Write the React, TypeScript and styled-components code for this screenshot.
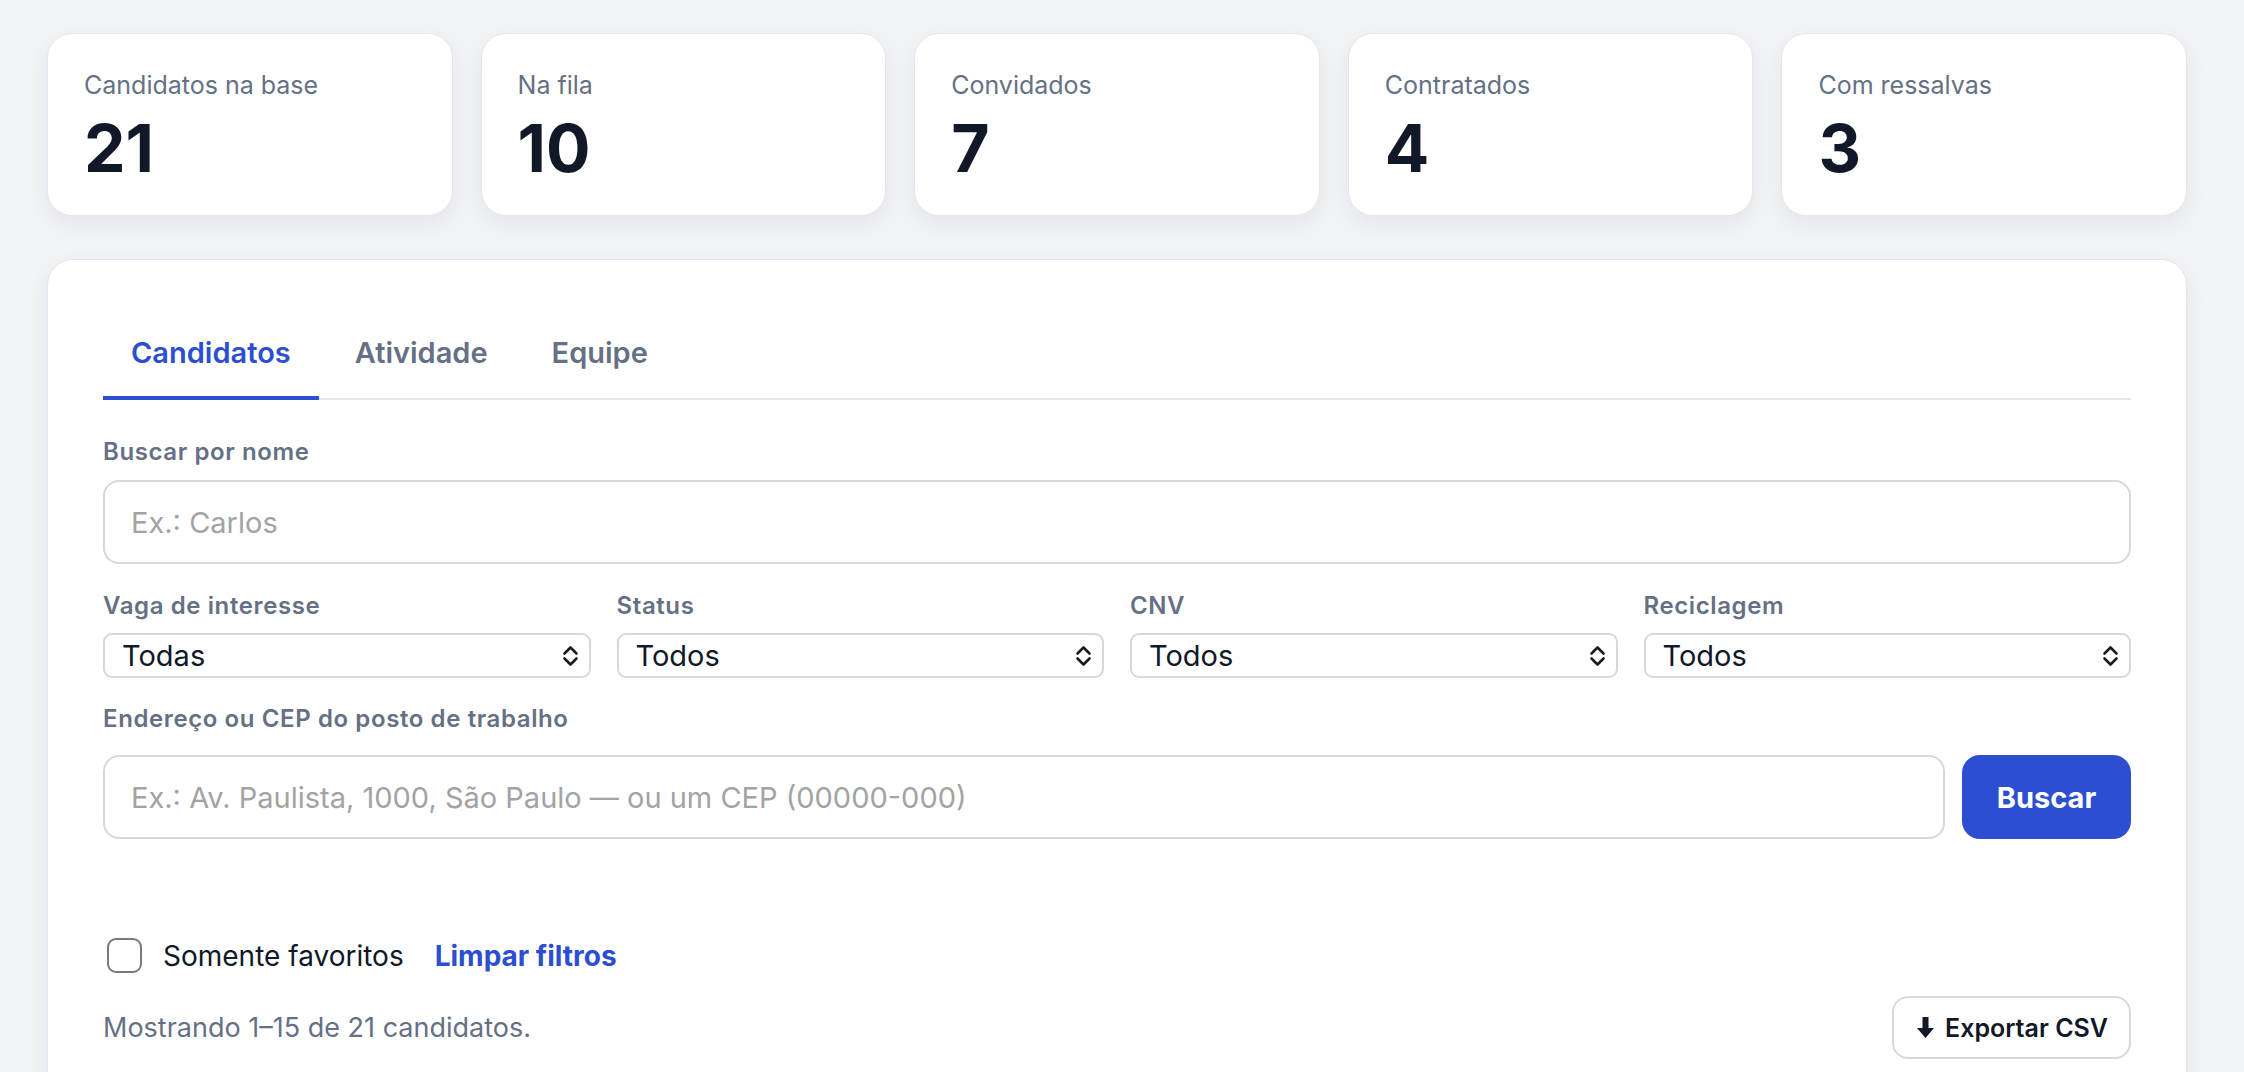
import React from "react";
import styled, { createGlobalStyle } from "styled-components";

const GlobalStyle = createGlobalStyle`
  html, body {
    margin: 0;
    padding: 0;
    background: #f2f3f7;
    font-family: Inter, "Noto Sans", "Liberation Sans", sans-serif;
  }
  * {
    box-sizing: border-box;
  }
`;

const Page = styled.div`
  min-height: 1072px;
  padding: 33px 57px 0 47px;
`;

const Stats = styled.div`
  display: grid;
  grid-template-columns: repeat(5, 1fr);
  gap: 28px;
`;

const StatCard = styled.div`
  background: #fff;
  border: 1px solid #e4e6ec;
  border-radius: 25px;
  box-shadow: 0 8px 24px rgba(16, 24, 40, 0.06);
  padding: 33px 36px 34px;
`;

const StatLabel = styled.div`
  font-size: 25px;
  line-height: 36px;
  color: #667085;
`;

const StatValue = styled.div`
  margin-top: 12px;
  font-size: 66px;
  line-height: 66px;
  font-weight: 700;
  color: #111827;
`;

const Panel = styled.div`
  margin-top: 43px;
  background: #fff;
  border: 1px solid #e4e6ec;
  border-radius: 26px;
  box-shadow: 0 8px 24px rgba(16, 24, 40, 0.06);
  padding: 52px 55px 40px;
`;

const TabList = styled.div`
  display: flex;
  gap: 8px;
  border-bottom: 2px solid #e5e7eb;
`;

const Tab = styled.button<{ $active?: boolean }>`
  appearance: none;
  background: none;
  border: none;
  border-bottom: 4px solid ${(p) => (p.$active ? "#2b4fd0" : "transparent")};
  margin-bottom: -2px;
  padding: 20px 28px 22px;
  font-family: inherit;
  font-size: 29px;
  line-height: 42px;
  font-weight: 600;
  color: ${(p) => (p.$active ? "#2b4fd0" : "#667085")};
  cursor: pointer;
`;

const Field = styled.div<{ $top?: number }>`
  margin-top: ${(p) => p.$top ?? 0}px;
  display: flex;
  flex-direction: column;
`;

const Label = styled.label<{ $gap?: number }>`
  font-size: 24px;
  line-height: 32px;
  letter-spacing: 0.6px;
  font-weight: 600;
  color: #667085;
  margin-bottom: ${(p) => p.$gap ?? 11}px;
`;

const TextInput = styled.input`
  height: 84px;
  width: 100%;
  border: 2px solid #d5d8de;
  border-radius: 16px;
  padding: 0 26px;
  font-family: inherit;
  font-size: 29px;
  color: #111827;
  background: #fff;
  outline: none;
  &::placeholder {
    color: #a3a3a3;
  }
`;

const SelectGrid = styled.div`
  margin-top: 26px;
  display: grid;
  grid-template-columns: repeat(4, 1fr);
  gap: 26px;
`;

const SelectWrap = styled.div`
  position: relative;
`;

const Select = styled.select`
  appearance: none;
  width: 100%;
  height: 45px;
  border: 2px solid #d5d8de;
  border-radius: 9px;
  background: #fff;
  padding: 0 40px 0 17px;
  font-family: inherit;
  font-size: 29px;
  color: #111827;
  outline: none;
`;

const Chevron = styled.svg`
  position: absolute;
  right: 12px;
  top: 12px;
  width: 17px;
  height: 22px;
  pointer-events: none;
`;

const SearchRow = styled.div`
  display: flex;
  gap: 17px;
`;

const PrimaryButton = styled.button`
  flex: 0 0 169px;
  height: 84px;
  border: none;
  border-radius: 18px;
  background: #2b4fd0;
  color: #fff;
  font-family: inherit;
  font-size: 29px;
  font-weight: 700;
  cursor: pointer;
`;

const FilterRow = styled.div`
  margin-top: 99px;
  padding-left: 4px;
  display: flex;
  align-items: center;
  gap: 31px;
`;

const CheckLabel = styled.label`
  display: flex;
  align-items: center;
  gap: 21px;
  font-size: 28px;
  color: #111827;
  cursor: pointer;
`;

const Box = styled.span`
  flex: 0 0 35px;
  width: 35px;
  height: 35px;
  border: 2.5px solid #7a7a7a;
  border-radius: 9px;
  background: #fff;
`;

const LinkButton = styled.button`
  appearance: none;
  background: none;
  border: none;
  padding: 0;
  font-family: inherit;
  font-size: 28px;
  font-weight: 700;
  color: #2b4fd0;
  cursor: pointer;
`;

const ResultRow = styled.div`
  margin-top: 23px;
  display: flex;
  align-items: center;
  justify-content: space-between;
`;

const ResultText = styled.div`
  font-size: 27px;
  color: #667085;
`;

const OutlineButton = styled.button`
  display: flex;
  align-items: center;
  gap: 11px;
  height: 63px;
  padding: 0 21px 0 23px;
  border: 2px solid #d5d8de;
  border-radius: 16px;
  background: #fff;
  font-family: inherit;
  font-size: 25px;
  font-weight: 600;
  color: #111827;
  cursor: pointer;
`;

const stats = [
  { label: "Candidatos na base", value: 21 },
  { label: "Na fila", value: 10 },
  { label: "Convidados", value: 7 },
  { label: "Contratados", value: 4 },
  { label: "Com ressalvas", value: 3 },
];

const filters = [
  { label: "Vaga de interesse", value: "Todas" },
  { label: "Status", value: "Todos" },
  { label: "CNV", value: "Todos" },
  { label: "Reciclagem", value: "Todos" },
];

const UpDown = () => (
  <Chevron viewBox="0 0 17 22" fill="none" stroke="#1b1b1f" strokeWidth="2.6" strokeLinecap="round" strokeLinejoin="round">
    <path d="M2.5 8.5 L8.5 2.5 L14.5 8.5" />
    <path d="M2.5 13.5 L8.5 19.5 L14.5 13.5" />
  </Chevron>
);

const DownArrow = () => (
  <svg width="17" height="21" viewBox="0 0 17 21">
    <path d="M5.5 0 H11.5 V11 H17 L8.5 21 L0 11 H5.5 Z" fill="#111827" />
  </svg>
);

export default function App() {
  return (
    <>
      <GlobalStyle />
      <Page>
        <Stats>
          {stats.map((s) => (
            <StatCard key={s.label}>
              <StatLabel>{s.label}</StatLabel>
              <StatValue>{s.value}</StatValue>
            </StatCard>
          ))}
        </Stats>

        <Panel>
          <TabList>
            <Tab $active>Candidatos</Tab>
            <Tab>Atividade</Tab>
            <Tab>Equipe</Tab>
          </TabList>

          <Field $top={36}>
            <Label $gap={12}>Buscar por nome</Label>
            <TextInput placeholder="Ex.: Carlos" />
          </Field>

          <SelectGrid>
            {filters.map((f) => (
              <Field key={f.label}>
                <Label>{f.label}</Label>
                <SelectWrap>
                  <Select defaultValue={f.value}>
                    <option>{f.value}</option>
                  </Select>
                  <UpDown />
                </SelectWrap>
              </Field>
            ))}
          </SelectGrid>

          <Field $top={25}>
            <Label $gap={20}>Endereço ou CEP do posto de trabalho</Label>
            <SearchRow>
              <TextInput placeholder="Ex.: Av. Paulista, 1000, São Paulo — ou um CEP (00000-000)" />
              <PrimaryButton>Buscar</PrimaryButton>
            </SearchRow>
          </Field>

          <FilterRow>
            <CheckLabel>
              <Box />
              Somente favoritos
            </CheckLabel>
            <LinkButton>Limpar filtros</LinkButton>
          </FilterRow>

          <ResultRow>
            <ResultText>Mostrando 1–15 de 21 candidatos.</ResultText>
            <OutlineButton>
              <DownArrow />
              Exportar CSV
            </OutlineButton>
          </ResultRow>
        </Panel>
      </Page>
    </>
  );
}
